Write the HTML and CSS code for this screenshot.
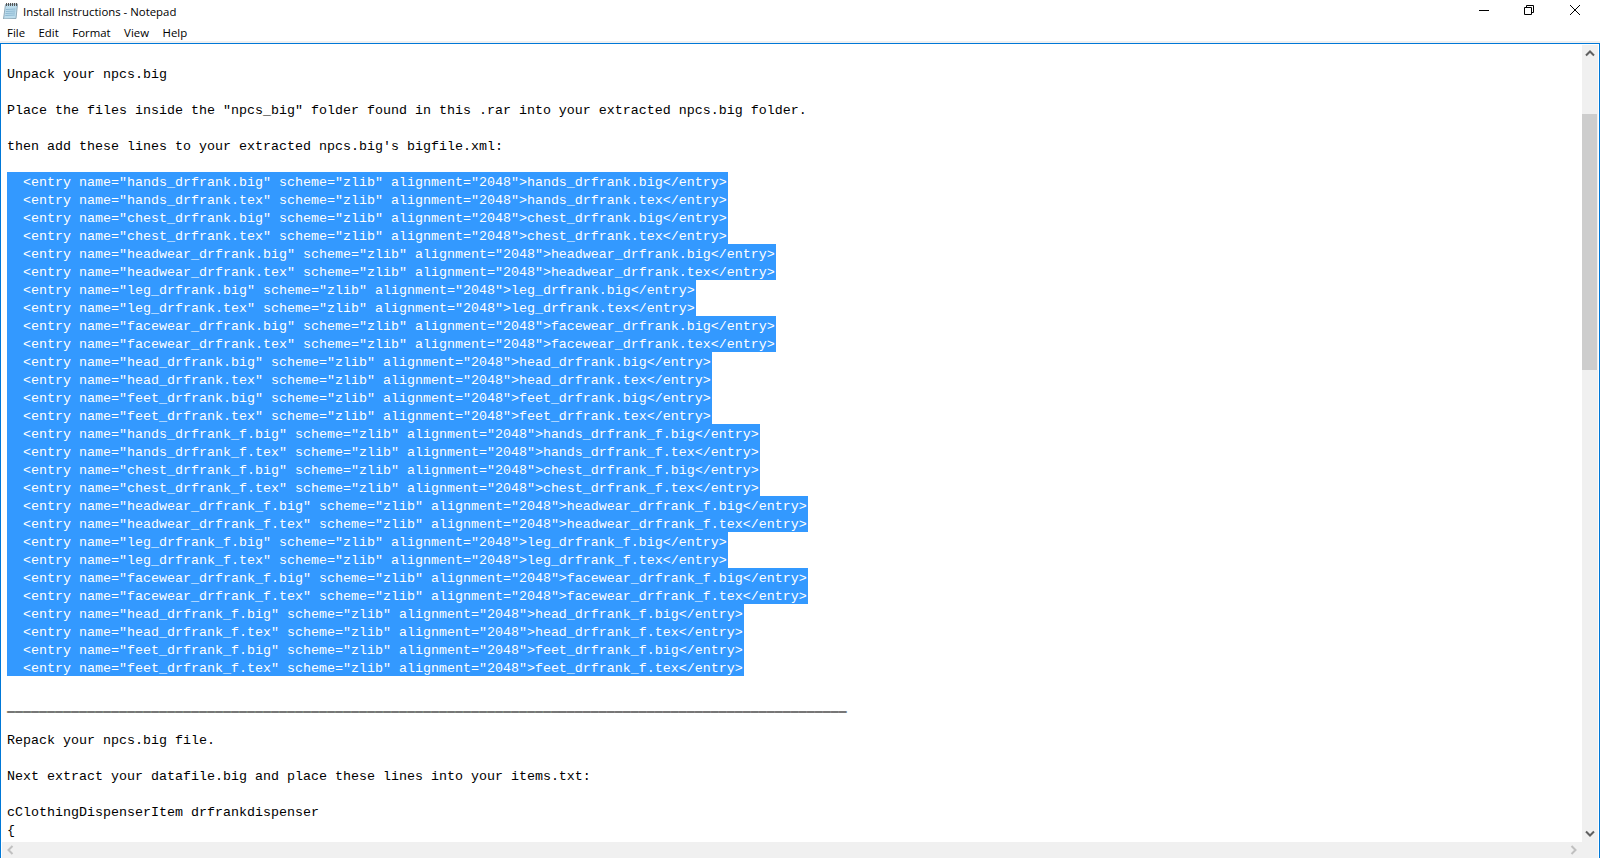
FILE: index.html
```html
<!DOCTYPE html>
<html lang="en">
<head>
<meta charset="utf-8">
<title>Install Instructions - Notepad</title>
<link rel="stylesheet" href="styles.css">
</head>
<body>
<div class="window">
  <header class="titlebar">
    <div class="title-left">
      <svg class="app-icon" width="16" height="16" viewBox="0 0 16 16">
        <path d="M2.500 1.500l12-.500-1.500 14.500-12.500.5z" fill="#bcdcec" stroke="#8fa9b8" stroke-width="1"/>
        <path d="M3 6.500l9.500-.5M2.800 8.500l9.500-.5M2.500 10.500l9.500-.5M2.300 12.500l9.500-.5" stroke="#8db8d2" stroke-width="1" fill="none"/>
        <path d="M3.500 0v3M5.500 0v3M7.500 0v3M9.500 0v3M11.500 0v3M13.500 0v3" stroke="#555" stroke-width="1" fill="none"/>
      </svg>
      <span class="title-text">Install Instructions - Notepad</span>
    </div>
    <div class="controls">
      <svg class="ctl" width="46" height="21" viewBox="0 0 46 21"><path d="M19 10.500h10" stroke="#000" fill="none"/></svg>
      <svg class="ctl" width="46" height="21" viewBox="0 0 46 21"><path d="M18.500 7.500h7v7h-7zM20.500 7.500v-2h7v7h-2" stroke="#000" fill="none"/></svg>
      <svg class="ctl" width="46" height="21" viewBox="0 0 46 21"><path d="M18 5l10 10M28 5l-10 10" stroke="#000" fill="none"/></svg>
    </div>
  </header>
  <nav class="menubar">
    <span class="menu-item">File</span>
    <span class="menu-item">Edit</span>
    <span class="menu-item">Format</span>
    <span class="menu-item">View</span>
    <span class="menu-item">Help</span>
  </nav>
  <main class="client">
    <div class="editor-row">
      <div class="editor">
<pre class="text">

Unpack your npcs.big

Place the files inside the "npcs_big" folder found in this .rar into your extracted npcs.big folder.

then add these lines to your extracted npcs.big's bigfile.xml:

<span class="sel">  &lt;entry name="hands_drfrank.big" scheme="zlib" alignment="2048"&gt;hands_drfrank.big&lt;/entry&gt;</span>
<span class="sel">  &lt;entry name="hands_drfrank.tex" scheme="zlib" alignment="2048"&gt;hands_drfrank.tex&lt;/entry&gt;</span>
<span class="sel">  &lt;entry name="chest_drfrank.big" scheme="zlib" alignment="2048"&gt;chest_drfrank.big&lt;/entry&gt;</span>
<span class="sel">  &lt;entry name="chest_drfrank.tex" scheme="zlib" alignment="2048"&gt;chest_drfrank.tex&lt;/entry&gt;</span>
<span class="sel">  &lt;entry name="headwear_drfrank.big" scheme="zlib" alignment="2048"&gt;headwear_drfrank.big&lt;/entry&gt;</span>
<span class="sel">  &lt;entry name="headwear_drfrank.tex" scheme="zlib" alignment="2048"&gt;headwear_drfrank.tex&lt;/entry&gt;</span>
<span class="sel">  &lt;entry name="leg_drfrank.big" scheme="zlib" alignment="2048"&gt;leg_drfrank.big&lt;/entry&gt;</span>
<span class="sel">  &lt;entry name="leg_drfrank.tex" scheme="zlib" alignment="2048"&gt;leg_drfrank.tex&lt;/entry&gt;</span>
<span class="sel">  &lt;entry name="facewear_drfrank.big" scheme="zlib" alignment="2048"&gt;facewear_drfrank.big&lt;/entry&gt;</span>
<span class="sel">  &lt;entry name="facewear_drfrank.tex" scheme="zlib" alignment="2048"&gt;facewear_drfrank.tex&lt;/entry&gt;</span>
<span class="sel">  &lt;entry name="head_drfrank.big" scheme="zlib" alignment="2048"&gt;head_drfrank.big&lt;/entry&gt;</span>
<span class="sel">  &lt;entry name="head_drfrank.tex" scheme="zlib" alignment="2048"&gt;head_drfrank.tex&lt;/entry&gt;</span>
<span class="sel">  &lt;entry name="feet_drfrank.big" scheme="zlib" alignment="2048"&gt;feet_drfrank.big&lt;/entry&gt;</span>
<span class="sel">  &lt;entry name="feet_drfrank.tex" scheme="zlib" alignment="2048"&gt;feet_drfrank.tex&lt;/entry&gt;</span>
<span class="sel">  &lt;entry name="hands_drfrank_f.big" scheme="zlib" alignment="2048"&gt;hands_drfrank_f.big&lt;/entry&gt;</span>
<span class="sel">  &lt;entry name="hands_drfrank_f.tex" scheme="zlib" alignment="2048"&gt;hands_drfrank_f.tex&lt;/entry&gt;</span>
<span class="sel">  &lt;entry name="chest_drfrank_f.big" scheme="zlib" alignment="2048"&gt;chest_drfrank_f.big&lt;/entry&gt;</span>
<span class="sel">  &lt;entry name="chest_drfrank_f.tex" scheme="zlib" alignment="2048"&gt;chest_drfrank_f.tex&lt;/entry&gt;</span>
<span class="sel">  &lt;entry name="headwear_drfrank_f.big" scheme="zlib" alignment="2048"&gt;headwear_drfrank_f.big&lt;/entry&gt;</span>
<span class="sel">  &lt;entry name="headwear_drfrank_f.tex" scheme="zlib" alignment="2048"&gt;headwear_drfrank_f.tex&lt;/entry&gt;</span>
<span class="sel">  &lt;entry name="leg_drfrank_f.big" scheme="zlib" alignment="2048"&gt;leg_drfrank_f.big&lt;/entry&gt;</span>
<span class="sel">  &lt;entry name="leg_drfrank_f.tex" scheme="zlib" alignment="2048"&gt;leg_drfrank_f.tex&lt;/entry&gt;</span>
<span class="sel">  &lt;entry name="facewear_drfrank_f.big" scheme="zlib" alignment="2048"&gt;facewear_drfrank_f.big&lt;/entry&gt;</span>
<span class="sel">  &lt;entry name="facewear_drfrank_f.tex" scheme="zlib" alignment="2048"&gt;facewear_drfrank_f.tex&lt;/entry&gt;</span>
<span class="sel">  &lt;entry name="head_drfrank_f.big" scheme="zlib" alignment="2048"&gt;head_drfrank_f.big&lt;/entry&gt;</span>
<span class="sel">  &lt;entry name="head_drfrank_f.tex" scheme="zlib" alignment="2048"&gt;head_drfrank_f.tex&lt;/entry&gt;</span>
<span class="sel">  &lt;entry name="feet_drfrank_f.big" scheme="zlib" alignment="2048"&gt;feet_drfrank_f.big&lt;/entry&gt;</span>
<span class="sel">  &lt;entry name="feet_drfrank_f.tex" scheme="zlib" alignment="2048"&gt;feet_drfrank_f.tex&lt;/entry&gt;</span>

<span class="rule">_________________________________________________________________________________________________________</span>

Repack your npcs.big file.

Next extract your datafile.big and place these lines into your items.txt:

cClothingDispenserItem drfrankdispenser
{
</pre>
      </div>
      <div class="vscroll">
        <svg class="arrow" width="16" height="17" viewBox="0 0 16 17"><path d="M4 10.500l4-4 4 4" stroke="#606060" stroke-width="2" fill="none"/></svg>
        <div class="v-track">
          <div class="v-thumb"></div>
        </div>
        <svg class="arrow" width="16" height="17" viewBox="0 0 16 17"><path d="M4 6.500l4 4 4-4" stroke="#606060" stroke-width="2" fill="none"/></svg>
      </div>
    </div>
    <div class="hscroll">
      <svg class="arrow" width="17" height="16" viewBox="0 0 17 16"><path d="M10.500 4l-4 4 4 4" stroke="#c0c0c0" stroke-width="2" fill="none"/></svg>
      <svg class="arrow" width="17" height="16" viewBox="0 0 17 16"><path d="M6.500 4l4 4-4 4" stroke="#c0c0c0" stroke-width="2" fill="none"/></svg>
    </div>
  </main>
</div>
</body>
</html>
```
FILE: styles.css
```css
* { box-sizing: border-box; }
html, body { margin: 0; height: 100%; overflow: hidden; background: #fff; }
.window { width: 1600px; height: 858px; display: flex; flex-direction: column; overflow: hidden; }
.titlebar { height: 23px; display: flex; justify-content: space-between; align-items: flex-start; background: #fff; flex: none; }
.title-left { display: flex; align-items: center; height: 22px; padding-left: 3px; }
.app-icon { margin-right: 4px; }
.title-text { font: 11.4px "Open Sans", "Noto Sans", sans-serif; color: #000; }
.controls { display: flex; padding-right: 2px; }
.ctl { display: block; }
.menubar { height: 20px; flex: none; display: flex; gap: 13.500px; padding-left: 7px; background: #fff; border-bottom: 2px solid #f0f0f0; font: 11.4px "Open Sans", "Noto Sans", sans-serif; color: #000; align-items: center; }
.client { flex: 1; min-height: 0; display: flex; flex-direction: column; border: 1px solid #0078d7; border-bottom: 0; padding: 1px 1px 0; }
.editor-row { flex: 1; min-height: 0; display: flex; }
.editor { flex: 1; min-width: 0; overflow: hidden; background: #fff; }
.text { margin: 0; padding: 3px 0 0 5px; font: 13.3333px/18px "Liberation Mono", "DejaVu Sans Mono", monospace; color: #000; }
.sel { background: #3399ff; color: #fff; display: inline-block; height: 18px; line-height: 22px; margin-top: -2px; padding-right: 1px; vertical-align: top; }
.rule { display: inline-block; height: 18px; line-height: 22px; vertical-align: top; text-shadow: 0 1px 0 #000; }
.vscroll { width: 16px; flex: none; display: flex; flex-direction: column; background: #f0f0f0; }
.v-track { flex: 1; position: relative; }
.v-thumb { position: absolute; left: 0; right: 1px; top: 0; height: 256px; margin-top: 52px; background: #cdcdcd; }
.arrow { display: block; flex: none; }
.hscroll { height: 16px; flex: none; display: flex; justify-content: space-between; background: #f0f0f0; padding-right: 16px; position: relative; }
```
